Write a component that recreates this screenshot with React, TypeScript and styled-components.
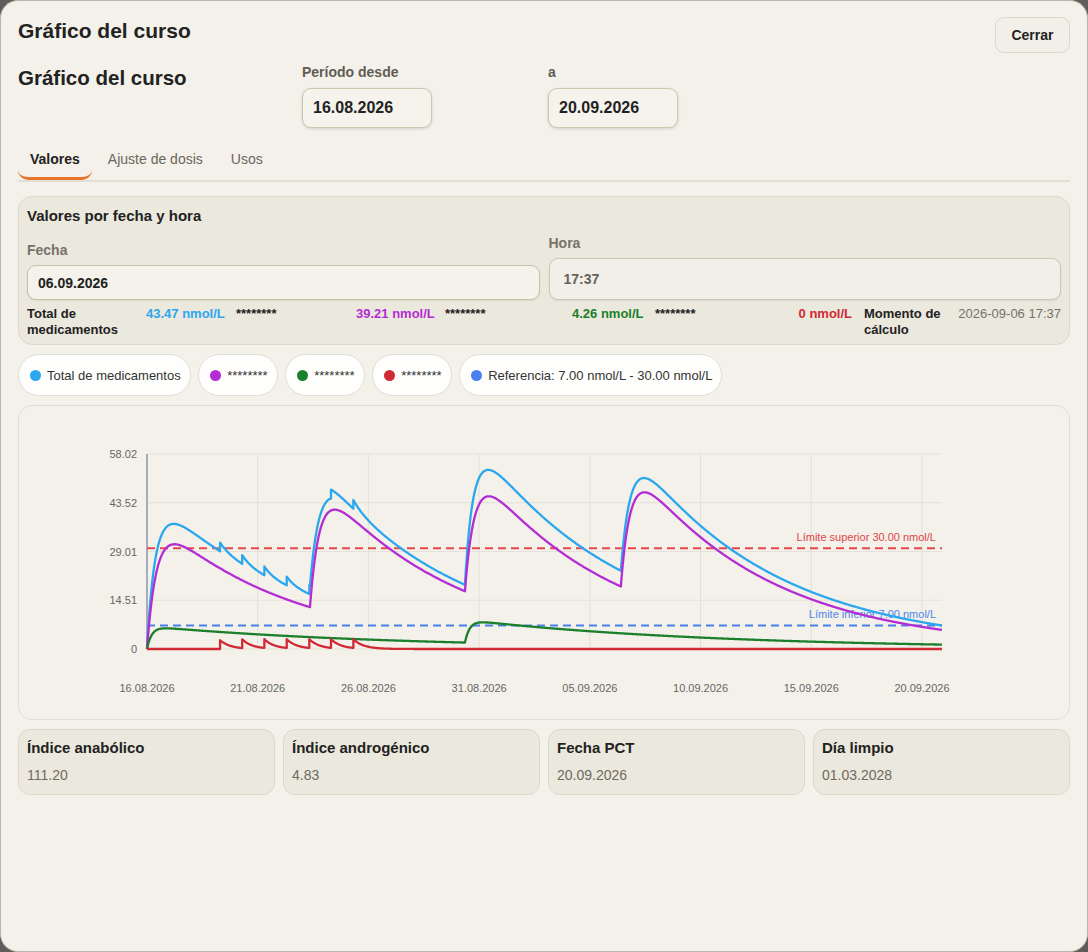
import React, { useMemo } from 'react';
import styled, { createGlobalStyle } from 'styled-components';

const GlobalStyle = createGlobalStyle`
  html, body { margin: 0; padding: 0; background: #5d5d5b; }
  body { font-family: "Liberation Sans", Arial, sans-serif; color: #222; }
  * { box-sizing: border-box; }
`;

const Dialog = styled.div`
  width: 1088px;
  height: 952px;
  background: #f3f1e9;
  border: 1px solid #b8b5ab;
  border-radius: 18px;
  padding: 16px 17px;
  display: flex;
  flex-direction: column;
  overflow: hidden;
`;

const Header = styled.div`
  display: flex;
  justify-content: space-between;
  align-items: flex-start;
  margin-bottom: 11px;
`;

const Title = styled.h1`
  margin: 0;
  font-size: 21px;
  line-height: 28px;
  font-weight: 700;
  color: #222;
`;

const CloseButton = styled.button`
  height: 36px;
  padding: 0 15.5px;
  font-family: "Liberation Sans", Arial, sans-serif;
  font-size: 14px;
  font-weight: 700;
  color: #222;
  background: #f1efe7;
  border: 1px solid #dbd7cb;
  border-radius: 9px;
`;

const PeriodRow = styled.div`
  display: flex;
  align-items: flex-start;
  margin-bottom: 13px;
`;

const Heading = styled.h2`
  margin: 2px 0 0;
  width: 284px;
  font-size: 20.5px;
  line-height: 24px;
  font-weight: 700;
  color: #222;
`;

const PeriodField = styled.div`
  width: 246px;
  display: flex;
  flex-direction: column;
`;

const FieldLabel = styled.label`
  font-size: 14px;
  line-height: 17px;
  font-weight: 700;
  color: #605c53;
  margin-bottom: 7px;
`;

const DateInput = styled.input`
  width: 130px;
  height: 40px;
  padding: 0 10px;
  font-family: "Liberation Sans", Arial, sans-serif;
  font-size: 16px;
  font-weight: 700;
  color: #222;
  background: #f5f3eb;
  border: 1px solid #cdc6b1;
  border-radius: 9px;
  box-shadow: 0 1px 3px rgba(0, 0, 0, 0.14);
  outline: none;
`;

const TabList = styled.div`
  display: flex;
  gap: 4px;
  border-bottom: 2px solid #e3dfd4;
  margin-bottom: 14px;
`;

const Tab = styled.div<{ $active?: boolean }>`
  padding: 10px 12px 9px;
  font-size: 14px;
  line-height: 17px;
  font-weight: ${p => (p.$active ? 700 : 400)};
  color: ${p => (p.$active ? '#222' : '#6b675e')};
  border-bottom: 3px solid ${p => (p.$active ? '#e8742c' : 'transparent')};
  border-radius: 0 0 10px 10px;
`;

const Stack = styled.div`
  display: flex;
  flex-direction: column;
  gap: 9px;
`;

const Panel = styled.section`
  background: #ebe8dd;
  border: 1px solid #dcd8cb;
  border-radius: 14px;
  padding: 10px 8px 6px;
`;

const PanelTitle = styled.h3`
  margin: 0;
  font-size: 15px;
  line-height: 18px;
  font-weight: 700;
  color: #222;
`;

const FieldsRow = styled.div`
  display: flex;
  align-items: flex-end;
  gap: 9px;
  margin-top: 10px;
`;

const FieldCol = styled.div`
  flex: 1;
  display: flex;
  flex-direction: column;
`;

const SmallLabel = styled.label`
  font-size: 14px;
  line-height: 17px;
  font-weight: 700;
  color: #77736a;
  margin-bottom: 6px;
`;

const WideInput = styled.input<{ $tall?: boolean }>`
  width: 100%;
  height: ${p => (p.$tall ? 42 : 35)}px;
  padding: 0 ${p => (p.$tall ? 14 : 10)}px;
  font-family: "Liberation Sans", Arial, sans-serif;
  font-size: 14px;
  font-weight: 700;
  color: ${p => (p.$tall ? '#66625a' : '#222')};
  background: ${p => (p.$tall ? '#f1efe7' : '#f4f2ea')};
  border: 1px solid ${p => (p.$tall ? '#ccc6b6' : '#c9c1aa')};
  border-radius: 9px;
  box-shadow: 0 1px 2px rgba(0, 0, 0, 0.08);
  outline: none;
`;

const Results = styled.div`
  display: grid;
  grid-template-columns: 119px 90px 120px 89px 127px 83px 133px 76px 92px 1fr;
  margin-top: 6px;
  font-size: 13px;
  line-height: 16px;
  font-weight: 700;
`;

const Cell = styled.div<{ $color?: string; $right?: boolean }>`
  color: ${p => p.$color || '#222'};
  text-align: ${p => (p.$right ? 'right' : 'left')};
  padding-right: ${p => (p.$right ? '12px' : '0')};
`;

const TimeCell = styled.div`
  color: #77736a;
  font-weight: 400;
  text-align: right;
  white-space: nowrap;
`;

const Legend = styled.div`
  display: flex;
  gap: 7.5px;
`;

const Pill = styled.div`
  height: 42px;
  display: flex;
  align-items: center;
  gap: 6px;
  padding: 0 9px 0 11px;
  background: #fefefc;
  border: 1px solid #e1ded5;
  border-radius: 21px;
  font-size: 13px;
  color: #333;
`;

const Dot = styled.span<{ $color: string }>`
  width: 11px;
  height: 11px;
  border-radius: 50%;
  background: ${p => p.$color};
  flex: none;
`;

const ChartCard = styled.div`
  height: 315px;
  border: 1px solid #e0ddd2;
  border-radius: 14px;
  background: #f3f1e9;
  overflow: hidden;
`;

const Stats = styled.div`
  display: grid;
  grid-template-columns: repeat(4, 1fr);
  gap: 8px;
`;

const StatCard = styled.div`
  background: #ebe8dd;
  border: 1px solid #dcd8cb;
  border-radius: 12px;
  padding: 9px 8px 10px;
`;

const StatTitle = styled.div`
  font-size: 15px;
  line-height: 18px;
  font-weight: 700;
  color: #222;
  margin-bottom: 10px;
`;

const StatValue = styled.div`
  font-size: 14px;
  line-height: 17px;
  color: #6f6a60;
`;

const COLORS = {
  total: '#2aa7ef',
  a: '#b42cd3',
  b: '#1b7f2c',
  c: '#d02a35',
  ref: '#4a80ee',
};

const DAY_PX = 110.714 / 5;
const X0 = 128;
const Y0 = 243;
const VPX = 195 / 58.02;
const T_END = 35.9;
const xOf = (d: number) => X0 + d * DAY_PX;
const yOf = (v: number) => Y0 - v * VPX;

const depot = (t: number, doses: number[], A: number, ka: number, ke: number) => {
  let s = 0;
  for (const d of doses) {
    const dt = t - d;
    if (dt > 0) s += A * (Math.exp(-ke * dt) - Math.exp(-ka * dt));
  }
  return s;
};

const bolus = (t: number, doses: number[], D: number, k: number) => {
  let s = 0;
  for (const d of doses) {
    const dt = t - d;
    if (dt >= 0) s += D * Math.exp(-k * dt);
  }
  return s;
};

const A_DOSES = [0, 7.36, 14.36, 21.4];
const B_DOSES = [0, 14.36];
const C_DOSES = [3.3, 4.3, 5.3, 6.31, 7.33, 8.31, 9.32];

const CourseChart: React.FC = () => {
  const paths = useMemo(() => {
    const ts: number[] = [];
    for (let t = 0; t <= T_END + 1e-9; t += 0.02) ts.push(t);
    for (const d of C_DOSES) ts.push(d - 1e-4, d);
    ts.sort((a, b) => a - b);
    const fa = (t: number) => depot(t, A_DOSES, 41, 2.3, 0.162);
    const fb = (t: number) => depot(t, B_DOSES, 6.77, 4.7, 0.088);
    const fc = (t: number) => bolus(t, C_DOSES, 2.6, 2.2);
    const build = (f: (t: number) => number) =>
      ts.map((t, i) => `${i ? 'L' : 'M'}${xOf(t).toFixed(2)} ${yOf(f(t)).toFixed(2)}`).join('');
    return {
      total: build(t => fa(t) + fb(t) + fc(t)),
      a: build(fa),
      b: build(fb),
      c: build(fc),
    };
  }, []);

  const yTicks = [0, 14.51, 29.01, 43.52, 58.02];
  const xTicks = ['16.08.2026', '21.08.2026', '26.08.2026', '31.08.2026', '05.09.2026', '10.09.2026', '15.09.2026', '20.09.2026'];
  const xEnd = xOf(T_END);

  return (
    <svg width="1050" height="313" viewBox="0 0 1050 313" fontFamily='"Liberation Sans", Arial, sans-serif'>
      {yTicks.map(v => (
        <line key={v} x1={X0} x2={xEnd} y1={yOf(v)} y2={yOf(v)} stroke="#e4e1d8" strokeWidth="1" />
      ))}
      {xTicks.map((_, i) => (
        <line key={i} x1={xOf(i * 5)} x2={xOf(i * 5)} y1={yOf(58.02)} y2={Y0} stroke="#e4e1d8" strokeWidth="1" />
      ))}
      <line x1={X0} x2={X0} y1={yOf(58.02)} y2={Y0} stroke="#8e98aa" strokeWidth="1.5" />
      {yTicks.map(v => (
        <text key={v} x={118} y={yOf(v) + 4} fontSize="11" fill="#666" textAnchor="end">
          {v === 0 ? '0' : v.toFixed(2)}
        </text>
      ))}
      {xTicks.map((l, i) => (
        <text key={l} x={xOf(i * 5)} y={286} fontSize="11" fill="#666" textAnchor="middle">
          {l}
        </text>
      ))}
      <line x1={X0} x2={xEnd} y1={yOf(30)} y2={yOf(30)} stroke="#e5484b" strokeWidth="2" strokeDasharray="8 5" />
      <line x1={X0} x2={xEnd} y1={yOf(7)} y2={yOf(7)} stroke={COLORS.ref} strokeWidth="2" strokeDasharray="8 5" />
      <text x={917} y={135} fontSize="11" fill="#e0464a" textAnchor="end">Límite superior 30.00 nmol/L</text>
      <text x={917} y={212} fontSize="11" fill="#4f86ec" textAnchor="end">Límite inferior 7.00 nmol/L</text>
      <path d={paths.total} fill="none" stroke={COLORS.total} strokeWidth="2.3" strokeLinejoin="round" />
      <path d={paths.a} fill="none" stroke={COLORS.a} strokeWidth="2.3" strokeLinejoin="round" />
      <path d={paths.b} fill="none" stroke={COLORS.b} strokeWidth="2.3" strokeLinejoin="round" />
      <path d={paths.c} fill="none" stroke={COLORS.c} strokeWidth="2.3" strokeLinejoin="round" />
    </svg>
  );
};

const legendItems = [
  { color: COLORS.total, label: 'Total de medicamentos' },
  { color: COLORS.a, label: '********' },
  { color: COLORS.b, label: '********' },
  { color: COLORS.c, label: '********' },
  { color: COLORS.ref, label: 'Referencia: 7.00 nmol/L - 30.00 nmol/L' },
];

const stats = [
  { title: 'Índice anabólico', value: '111.20' },
  { title: 'Índice androgénico', value: '4.83' },
  { title: 'Fecha PCT', value: '20.09.2026' },
  { title: 'Día limpio', value: '01.03.2028' },
];

const App: React.FC = () => (
  <>
    <GlobalStyle />
    <Dialog>
      <Header>
        <Title>Gráfico del curso</Title>
        <CloseButton>Cerrar</CloseButton>
      </Header>
      <PeriodRow>
        <Heading>Gráfico del curso</Heading>
        <PeriodField>
          <FieldLabel>Período desde</FieldLabel>
          <DateInput readOnly value="16.08.2026" />
        </PeriodField>
        <PeriodField>
          <FieldLabel>a</FieldLabel>
          <DateInput readOnly value="20.09.2026" />
        </PeriodField>
      </PeriodRow>
      <TabList>
        <Tab $active>Valores</Tab>
        <Tab>Ajuste de dosis</Tab>
        <Tab>Usos</Tab>
      </TabList>
      <Stack>
        <Panel>
          <PanelTitle>Valores por fecha y hora</PanelTitle>
          <FieldsRow>
            <FieldCol>
              <SmallLabel>Fecha</SmallLabel>
              <WideInput readOnly value="06.09.2026" />
            </FieldCol>
            <FieldCol>
              <SmallLabel>Hora</SmallLabel>
              <WideInput $tall readOnly value="17:37" />
            </FieldCol>
          </FieldsRow>
          <Results>
            <Cell>Total de medicamentos</Cell>
            <Cell $color={COLORS.total}>43.47 nmol/L</Cell>
            <Cell>********</Cell>
            <Cell $color={COLORS.a}>39.21 nmol/L</Cell>
            <Cell>********</Cell>
            <Cell $color={COLORS.b}>4.26 nmol/L</Cell>
            <Cell>********</Cell>
            <Cell $color={COLORS.c} $right>0 nmol/L</Cell>
            <Cell>Momento de cálculo</Cell>
            <TimeCell>2026-09-06 17:37</TimeCell>
          </Results>
        </Panel>
        <Legend>
          {legendItems.map((it, i) => (
            <Pill key={i}>
              <Dot $color={it.color} />
              {it.label}
            </Pill>
          ))}
        </Legend>
        <ChartCard>
          <CourseChart />
        </ChartCard>
        <Stats>
          {stats.map(s => (
            <StatCard key={s.title}>
              <StatTitle>{s.title}</StatTitle>
              <StatValue>{s.value}</StatValue>
            </StatCard>
          ))}
        </Stats>
      </Stack>
    </Dialog>
  </>
);

export default App;
